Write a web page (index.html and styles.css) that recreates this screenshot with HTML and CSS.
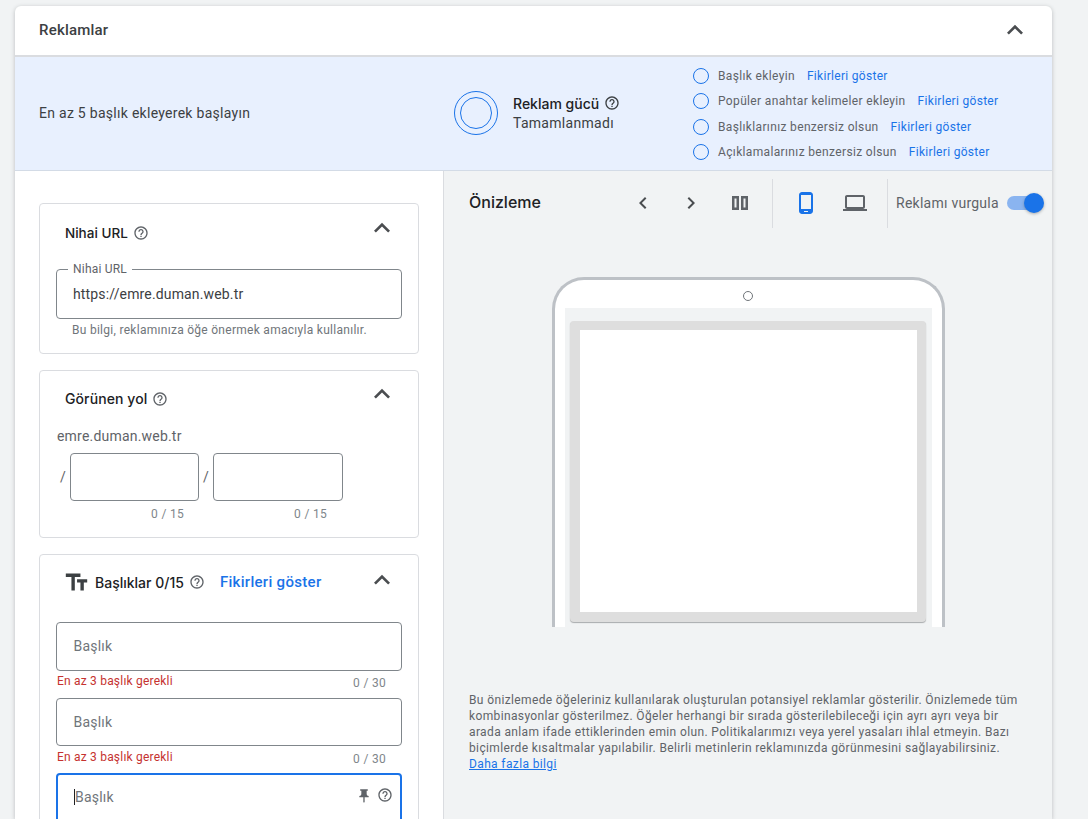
FILE: index.html
```html
<!DOCTYPE html>
<html lang="tr">
<head>
    <meta charset="utf-8">
    <title>Reklamlar</title>
    <link rel="stylesheet" href="styles.css">
</head>
<body>
<svg class="sprite" width="0" height="0">
    <defs>
        <symbol id="i-help" viewBox="0 0 24 24"><path d="M11 18h2v-2h-2v2zm1-16C6.48 2 2 6.48 2 12s4.48 10 10 10 10-4.48 10-10S17.52 2 12 2zm0 18c-4.41 0-8-3.59-8-8s3.59-8 8-8 8 3.59 8 8-3.59 8-8 8zm0-14c-2.21 0-4 1.79-4 4h2c0-1.1.9-2 2-2s2 .9 2 2c0 2-3 1.75-3 5h2c0-2.25 3-2.5 3-5 0-2.21-1.79-4-4-4z"/></symbol>
        <symbol id="i-up" viewBox="0 0 24 24"><path d="M12 8l-6 6 1.41 1.41L12 10.83l4.59 4.58L18 14z"/></symbol>
        <symbol id="i-left" viewBox="0 0 24 24"><path d="M15.41 7.41L14 6l-6 6 6 6 1.41-1.41L10.83 12z"/></symbol>
        <symbol id="i-right" viewBox="0 0 24 24"><path d="M10 6L8.59 7.41 13.17 12l-4.58 4.59L10 18l6-6z"/></symbol>
        <symbol id="i-columns" viewBox="0 0 24 24"><path d="M4 5h7v14H4V5zm2.5 2.5v9h2v-9h-2zM13 5h7v14h-7V5zm2.5 2.5v9h2v-9h-2z"/></symbol>
        <symbol id="i-phone" viewBox="0 0 24 24"><path d="M16 1H8C6.34 1 5 2.34 5 4v16c0 1.66 1.34 3 3 3h8c1.66 0 3-1.34 3-3V4c0-1.66-1.34-3-3-3zm-2 20h-4v-1h4v1zm3-3H7V4h10v14z"/></symbol>
        <symbol id="i-laptop" viewBox="0 0 24 24"><path d="M20 18c1.1 0 1.99-.9 1.99-2L22 6c0-1.1-.9-2-2-2H4c-1.1 0-2 .9-2 2v10c0 1.1.9 2 2 2H0v2h24v-2h-4zM4 6h16v10H4V6z"/></symbol>
        <symbol id="i-text" viewBox="0 0 24 24"><path d="M2.5 4v3h5v12h3V7h5V4h-13zm19 5h-9v3h3v7h3v-7h3V9z"/></symbol>
        <symbol id="i-pin" viewBox="0 0 24 24"><path d="M16 9V4h1c.55 0 1-.45 1-1s-.45-1-1-1H7c-.55 0-1 .45-1 1s.45 1 1 1h1v5c0 1.66-1.34 3-3 3v2h5.97v7l1 1 1-1v-7H19v-2c-1.66 0-3-1.34-3-3z"/></symbol>
    </defs>
</svg>

<div class="panel">
    <header class="panel-head">
        <h1>Reklamlar</h1>
        <svg class="icon chevron-main"><use href="#i-up"/></svg>
    </header>

    <section class="band">
        <div class="band-text">En az 5 başlık ekleyerek başlayın</div>
        <div class="strength">
            <div class="ring"><div class="ring-inner"></div></div>
            <div>
                <div class="strength-title">Reklam gücü <svg class="icon help"><use href="#i-help"/></svg></div>
                <div class="strength-state">Tamamlanmadı</div>
            </div>
        </div>
        <ul class="tips">
            <li><span class="dot"></span><span>Başlık ekleyin</span><a>Fikirleri göster</a></li>
            <li><span class="dot"></span><span>Popüler anahtar kelimeler ekleyin</span><a>Fikirleri göster</a></li>
            <li><span class="dot"></span><span>Başlıklarınız benzersiz olsun</span><a>Fikirleri göster</a></li>
            <li><span class="dot"></span><span>Açıklamalarınız benzersiz olsun</span><a>Fikirleri göster</a></li>
        </ul>
    </section>

    <div class="columns">
        <div class="form-col">
            <!-- Nihai URL -->
            <section class="card card-url">
                <div class="card-head">
                    <h2>Nihai URL</h2>
                    <svg class="icon help"><use href="#i-help"/></svg>
                    <svg class="icon chevron"><use href="#i-up"/></svg>
                </div>
                <div class="field field-filled">
                    <span class="field-label">Nihai URL</span>
                    https://emre.duman.web.tr
                </div>
                <div class="hint">Bu bilgi, reklamınıza öğe önermek amacıyla kullanılır.</div>
            </section>

            <!-- Görünen yol -->
            <section class="card card-path">
                <div class="card-head">
                    <h2>Görünen yol</h2>
                    <svg class="icon help"><use href="#i-help"/></svg>
                    <svg class="icon chevron"><use href="#i-up"/></svg>
                </div>
                <div class="domain">emre.duman.web.tr</div>
                <div class="path-row">
                    <div class="path-part">
                        <div class="path-input"><span class="slash">/</span><div class="field field-path"></div></div>
                        <div class="count">0 / 15</div>
                    </div>
                    <div class="path-part">
                        <div class="path-input"><span class="slash">/</span><div class="field field-path"></div></div>
                        <div class="count">0 / 15</div>
                    </div>
                </div>
            </section>

            <!-- Başlıklar -->
            <section class="card card-titles">
                <div class="card-head titles-head">
                    <svg class="icon text-icon"><use href="#i-text"/></svg>
                    <h2 class="titles-name">Başlıklar 0/15</h2>
                    <svg class="icon help"><use href="#i-help"/></svg>
                    <a class="ideas">Fikirleri göster</a>
                    <svg class="icon chevron"><use href="#i-up"/></svg>
                </div>
                <div class="field field-empty">Başlık</div>
                <div class="field-foot"><span class="error">En az 3 başlık gerekli</span><span class="count">0 / 30</span></div>
                <div class="field field-empty">Başlık</div>
                <div class="field-foot"><span class="error">En az 3 başlık gerekli</span><span class="count">0 / 30</span></div>
                <div class="field field-empty field-focus">
                    <span class="caret"></span>Başlık
                    <span class="field-icons">
                        <svg class="icon pin"><use href="#i-pin"/></svg>
                        <svg class="icon help-field"><use href="#i-help"/></svg>
                    </span>
                </div>
            </section>
        </div>

        <div class="preview-col">
            <div class="toolbar">
                <h2 class="preview-title">Önizleme</h2>
                <svg class="icon tool tool-left"><use href="#i-left"/></svg>
                <svg class="icon tool tool-right"><use href="#i-right"/></svg>
                <svg class="icon tool tool-columns"><use href="#i-columns"/></svg>
                <span class="divider"></span>
                <svg class="icon tool tool-phone"><use href="#i-phone"/></svg>
                <svg class="icon tool tool-laptop"><use href="#i-laptop"/></svg>
                <span class="divider"></span>
                <span class="highlight-label">Reklamı vurgula</span>
                <span class="toggle"><span class="toggle-knob"></span></span>
            </div>

            <div class="phone">
                <div class="camera"></div>
                <div class="screen">
                    <div class="ad-frame"><div class="ad-body"></div></div>
                </div>
            </div>

            <p class="note">Bu önizlemede öğeleriniz kullanılarak oluşturulan potansiyel reklamlar gösterilir. Önizlemede tüm kombinasyonlar gösterilmez. Öğeler herhangi bir sırada gösterilebileceği için ayrı ayrı veya bir arada anlam ifade ettiklerinden emin olun. Politikalarımızı veya yerel yasaları ihlal etmeyin. Bazı biçimlerde kısaltmalar yapılabilir. Belirli metinlerin reklamınızda görünmesini sağlayabilirsiniz. <a>Daha fazla bilgi</a></p>
        </div>
    </div>
</div>
</body>
</html>
```

FILE: styles.css
```css
* {
    box-sizing: border-box;
}

html, body {
    height: 100%;
}

body {
    margin: 0;
    padding: 6px 36px 0 15px;
    overflow: hidden;
    font-family: Roboto, "Liberation Sans", sans-serif;
    color: #3c4043;
    background-color: #f1f3f4;
}

h1, h2, p, ul {
    margin: 0;
    padding: 0;
}

.sprite {
    position: absolute;
}

.icon {
    display: block;
    flex: none;
    width: 24px;
    height: 24px;
    fill: #5f6368;
}

.panel {
    height: 813px;
    overflow: hidden;
    background-color: #fff;
    border-radius: 6px 6px 0 0;
    box-shadow: 0 1px 4px rgba(60, 64, 67, 0.3);
}

.panel-head {
    display: flex;
    align-items: center;
    justify-content: space-between;
    height: 51px;
    padding: 0 21px 2px 24px;
    border-bottom: 2px solid #dadce0;
}

.panel-head h1 {
    font-size: 15px;
    font-weight: 500;
    letter-spacing: 0.2px;
    color: #3c4043;
}

.chevron-main {
    width: 32px;
    height: 32px;
    fill: #4a4d50;
}

/* Синяя полоса */
.band {
    display: flex;
    align-items: center;
    height: 114px;
    padding: 0 0 2px 24px;
    background-color: #e8f0fe;
    border-bottom: 1px solid #d3dbe6;
}

.band-text {
    width: 415px;
    font-size: 14px;
    letter-spacing: 0.28px;
    color: #3c4043;
}

.strength {
    display: flex;
    align-items: center;
    gap: 15px;
    width: 239px;
}

.ring {
    display: flex;
    align-items: center;
    justify-content: center;
    width: 44px;
    height: 44px;
    border: 1px solid #1a73e8;
    border-radius: 50%;
}

.ring-inner {
    width: 32px;
    height: 32px;
    border: 1px solid #1a73e8;
    border-radius: 50%;
}

.strength-title {
    display: flex;
    align-items: center;
    gap: 5px;
    font-family: Inter, Roboto, sans-serif;
    font-size: 14px;
    font-weight: 500;
    color: #202124;
}

.strength-title .help {
    width: 16px;
    height: 16px;
    fill: #3c4043;
}

.strength-state {
    margin-top: 3px;
    font-size: 14px;
    letter-spacing: 0.3px;
    color: #3c4043;
}

.tips {
    list-style: none;
    margin-top: 3px;
    font-size: 12px;
    letter-spacing: 0.35px;
    color: #5f6368;
}

.tips li {
    display: flex;
    align-items: center;
    height: 25.3px;
}

.dot {
    width: 16px;
    height: 16px;
    margin-right: 9px;
    border: 1px solid #1a73e8;
    border-radius: 50%;
}

.tips a {
    margin-left: 12px;
    letter-spacing: 0.3px;
    color: #1a73e8;
}

.columns {
    display: flex;
}

.form-col {
    width: 429px;
    padding: 32px 24px 0;
    background-color: #fff;
    border-right: 1px solid #dadce0;
}

.card {
    position: relative;
    margin-bottom: 16px;
    padding: 0 16px;
    border: 1px solid #dadce0;
    border-radius: 4px;
}

.card-url {
    height: 151px;
}

.card-path {
    height: 168px;
}

.card-head {
    display: flex;
    align-items: center;
    height: 59px;
    padding: 0 0 2px 9px;
}

.card-head h2 {
    font-family: Inter, Roboto, sans-serif;
    font-size: 13.5px;
    font-weight: 500;
    color: #202124;
}

.card-path .card-head h2 {
    font-size: 14px;
    letter-spacing: 0.1px;
}

.card-head .help {
    width: 16px;
    height: 16px;
    margin-left: 5px;
}

.card-head .chevron {
    width: 32px;
    height: 32px;
    margin: -10px 4px 0 auto;
    fill: #4a4d50;
}

.field {
    position: relative;
    border: 1px solid #80868b;
    border-radius: 4px;
}

.field-filled {
    display: flex;
    align-items: center;
    height: 50px;
    margin-top: 6px;
    padding-left: 16px;
    font-size: 14px;
    letter-spacing: 0.15px;
    color: #3c4043;
}

.field-label {
    position: absolute;
    top: -7px;
    left: 11px;
    padding: 0 5px;
    font-size: 12px;
    letter-spacing: 0.2px;
    line-height: 13px;
    color: #5f6368;
    background-color: #fff;
}

.hint {
    margin-top: 4px;
    padding-left: 16px;
    font-size: 12px;
    line-height: 14px;
    letter-spacing: 0.28px;
    color: #70757a;
}

.card-path .card-head {
    padding-bottom: 4px;
}

.domain {
    margin-top: -2px;
    padding-left: 1px;
    font-size: 14px;
    letter-spacing: 0.2px;
    line-height: 16px;
    color: #5f6368;
}

.path-row {
    display: flex;
    margin-top: 9px;
}

.path-part {
    width: 143px;
}

.path-part + .path-part {
    width: 144px;
}

.path-part + .path-part .count {
    padding-right: 16px;
}

.path-input {
    display: flex;
    align-items: center;
}

.slash {
    width: 14px;
    padding-left: 4px;
    font-size: 14px;
    color: #5f6368;
}

.field-path {
    flex: 1;
    height: 48px;
}

.path-part .count {
    margin-top: 6px;
    text-align: right;
}

.path-part:first-child .count {
    padding-right: 15px;
}

.count {
    font-size: 12px;
    line-height: 14px;
    letter-spacing: 0.3px;
    color: #80868b;
}

.titles-head {
    height: 56px;
    padding-left: 9px;
    margin-bottom: 11px;
}

.card-titles {
    margin-bottom: 0;
    height: 300px;
}

.text-icon {
    width: 27px;
    height: 27px;
    margin-left: -2px;
    margin-right: 5px;
    fill: #3c4043;
}

.card-head .titles-name {
    font-size: 14px;
}

.ideas {
    margin-left: 15px;
    font-size: 15px;
    font-weight: 500;
    letter-spacing: 0.3px;
    color: #1a73e8;
}

.titles-head .chevron {
    margin-top: -5px;
}

.field-empty {
    display: flex;
    align-items: center;
    height: 48.5px;
    padding-left: 16.5px;
    font-size: 14px;
    letter-spacing: 0.2px;
    color: #70757a;
}

.field-foot {
    display: flex;
    justify-content: space-between;
    align-items: flex-start;
    height: 27px;
    padding: 3.5px 16px 0 1px;
}

.error {
    font-size: 12px;
    line-height: 14px;
    letter-spacing: 0.2px;
    color: #c5322f;
}

.field-foot .count {
    padding-top: 2px;
}

.field-focus {
    border: 2px solid #1a73e8;
    padding-left: 16px;
    height: 60px;
    padding-bottom: 12px;
}

.caret {
    width: 1px;
    height: 16px;
    background-color: #202124;
}

.field-icons {
    display: flex;
    align-items: center;
    gap: 5px;
    margin: 0 7px 4px auto;
}

.pin {
    width: 16px;
    height: 16px;
    margin-top: 2px;
}

.help-field {
    width: 16px;
    height: 16px;
}

/* Предпросмотр */
.preview-col {
    flex: 1;
    height: 700px;
    background-color: #f1f3f4;
}

.toolbar {
    display: flex;
    align-items: center;
    height: 62px;
    padding: 2px 8px 0 25px;
}

.preview-title {
    width: 162px;
    margin-top: -2px;
    font-family: Inter, Roboto, sans-serif;
    font-size: 16px;
    font-weight: 500;
    color: #202124;
}

.tool {
    fill: #5f6368;
}

.tool-left, .tool-right {
    fill: #4a4d50;
}

.tool-right {
    margin-left: 24px;
}

.tool-columns {
    margin-left: 25px;
}

.divider {
    width: 1px;
    height: 49px;
    margin-left: 20px;
    background-color: #dadce0;
}

.tool-phone {
    margin-left: 21px;
    fill: #1a73e8;
}

.tool-laptop {
    margin-left: 25px;
}

.highlight-label {
    margin-left: 8px;
    font-size: 14px;
    letter-spacing: 0.25px;
    color: #5f6368;
}

.toggle {
    position: relative;
    width: 34px;
    height: 14px;
    margin-left: 8px;
    border-radius: 7px;
    background-color: #8ab4f0;
}

.toggle-knob {
    position: absolute;
    top: -3px;
    right: -3px;
    width: 20px;
    height: 20px;
    border-radius: 50%;
    background-color: #1a73e8;
    box-shadow: 0 1px 3px rgba(60, 64, 67, 0.4);
}

.phone {
    width: 393px;
    height: 350px;
    margin: 44px auto 0;
    padding: 0 10px;
    background-color: #fff;
    border: 3px solid #bdc1c6;
    border-bottom: none;
    border-radius: 32px 32px 0 0;
}

.camera {
    width: 10px;
    height: 10px;
    margin: 11px auto 7px;
    border: 1px solid #70757a;
    border-radius: 50%;
}

.screen {
    height: 319px;
    padding: 13px 6px 5px 5px;
    background-color: #f1f3f4;
}

.ad-frame {
    height: 301px;
    padding: 9px 9px 10px 10px;
    background-color: #dedede;
    border-radius: 4px;
    box-shadow: 0 1px 1px rgba(60, 64, 67, 0.4);
}

.ad-body {
    height: 100%;
    background-color: #fff;
}

.note {
    margin: 65px 25px 0;
    font-size: 12px;
    line-height: 16px;
    letter-spacing: 0.37px;
    color: #5f6368;
}

.note a {
    display: block;
    width: fit-content;
    color: #1a73e8;
    text-decoration: underline;
}
```
